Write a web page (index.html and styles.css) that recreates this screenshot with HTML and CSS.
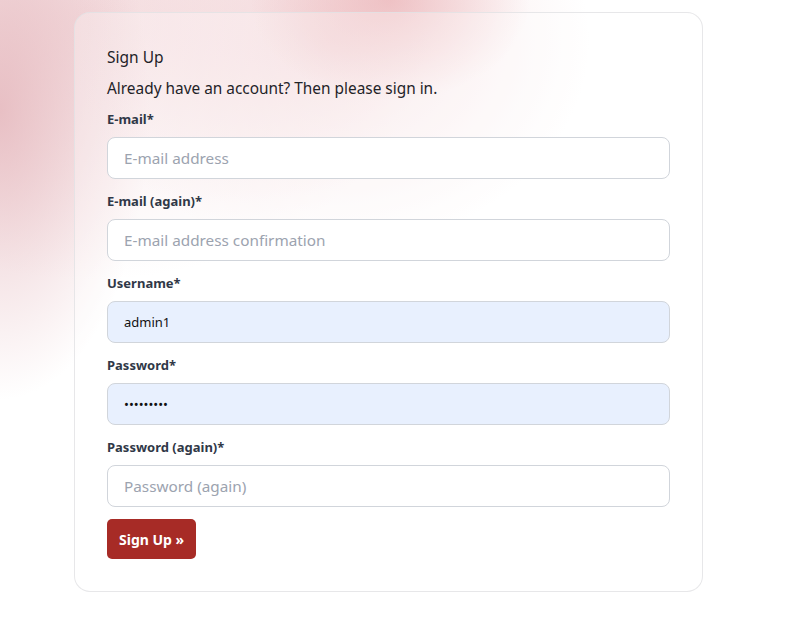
FILE: index.html
```html
<!DOCTYPE html>
<html lang="en">
<head>
<meta charset="utf-8">
<title>Sign Up</title>
<link rel="stylesheet" href="styles.css">
</head>
<body>
<main class="wrap">
  <section class="card">
    <h1 class="title">Sign Up</h1>
    <p class="lead">Already have an account? Then please sign in.</p>
    <form class="form">
      <div class="field">
        <label class="label">E-mail*</label>
        <input class="input" type="text" placeholder="E-mail address">
      </div>
      <div class="field">
        <label class="label">E-mail (again)*</label>
        <input class="input" type="text" placeholder="E-mail address confirmation">
      </div>
      <div class="field">
        <label class="label">Username*</label>
        <input class="input filled" type="text" value="admin1">
      </div>
      <div class="field">
        <label class="label">Password*</label>
        <input class="input filled" type="password" value="123456789">
      </div>
      <div class="field">
        <label class="label">Password (again)*</label>
        <input class="input" type="password" placeholder="Password (again)">
      </div>
      <button class="btn" type="button">Sign Up »</button>
    </form>
  </section>
</main>
</body>
</html>
```
FILE: styles.css
```css
html {
  margin: 0;
  padding: 0;
  min-height: 100%;
  background-color: #ffffff;
  background-image:
    radial-gradient(ellipse 140px 100px at 390px 0px, rgba(232, 168, 172, 0.6), rgba(232, 168, 172, 0) 100%),
    radial-gradient(ellipse 260px 210px at 330px 40px, rgba(236, 190, 194, 0.45), rgba(236, 190, 194, 0) 100%),
    radial-gradient(ellipse 150px 290px at 0px 110px, rgba(226, 176, 182, 0.75), rgba(226, 176, 182, 0) 100%),
    radial-gradient(ellipse 340px 260px at 90px 20px, rgba(236, 196, 200, 0.55), rgba(236, 196, 200, 0) 100%);
  background-repeat: no-repeat;
}
body {
  margin: 0;
  padding: 0;
  font-family: "Noto Sans", "Open Sans", sans-serif;
  color: #1f2328;
}
.wrap {
  padding: 12px 0 0 74px;
}
.card {
  width: 563px;
  padding: 32px;
  border: 1px solid rgba(225, 225, 228, 0.8);
  border-radius: 16px;
  background: rgba(255, 255, 255, 0.3);
}
.title {
  margin: 0;
  font-size: 15.5px;
  font-weight: 400;
  line-height: 24px;
  color: #1f2328;
}
.lead {
  margin: 8px 0 0;
  font-size: 15.4px;
  line-height: 24px;
  color: #1f2328;
}
.form {
  display: flex;
  flex-direction: column;
  margin-top: 8px;
}
.field {
  display: flex;
  flex-direction: column;
  gap: 8px;
  margin-bottom: 12px;
}
.label {
  font-size: 13px;
  font-weight: 700;
  line-height: 20px;
  color: #303847;
}
.input {
  box-sizing: border-box;
  height: 42px;
  width: 100%;
  padding: 0 16px;
  border: 1px solid #d1d5db;
  border-radius: 8px;
  background: #ffffff;
  font-family: "Noto Sans", "Open Sans", sans-serif;
  font-size: 15.3px;
  color: #1f2328;
  outline: none;
}
.input::placeholder {
  color: #9ca3af;
}
.input.filled {
  background: #e8f0fe;
  font-size: 13px;
  color: #111;
}
.btn {
  align-self: flex-start;
  height: 40px;
  padding: 0 12px;
  border: 0;
  border-radius: 5px;
  background: #a72b26;
  color: #ffffff;
  font-family: "Noto Sans", "Open Sans", sans-serif;
  font-size: 14px;
  font-weight: 700;
}
```
